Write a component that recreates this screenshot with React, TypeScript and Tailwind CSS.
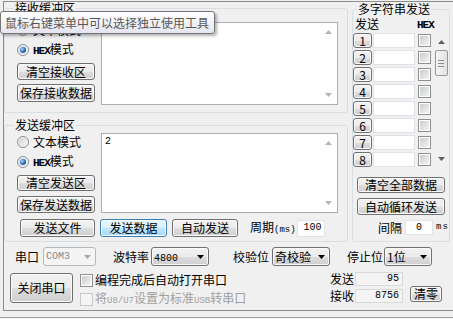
import React from 'react';

// classic Win7-ish serial port tool panel

const MONO = "font-['Liberation_Mono',monospace]";

const Arrow = ({ up, color }: { up?: boolean; color: string }) => (
    <svg width="7" height="4" viewBox="0 0 7 4">
        <path d={up ? 'M0 4L3.5 0L7 4Z' : 'M0 0H7L3.5 4Z'} fill={color} />
    </svg>
);

const Btn = ({ children, className = '', focus }: { children: React.ReactNode; className?: string; focus?: boolean }) => (
    <div
        className={`flex items-center justify-center rounded-[3px] border text-[12px] leading-none whitespace-nowrap shadow-[inset_0_0_0_1px_#fbfbfb] ${
            focus
                ? 'border-[#3c7fb1] bg-[linear-gradient(#eaf6fd,#d9f0fc_50%,#bee6fd_51%,#a7d9f5)]'
                : 'border-[#707070] bg-[linear-gradient(#f2f2f2,#ebebeb_50%,#dddddd_51%,#cfcfcf)]'
        } ${className}`}
    >
        {children}
    </div>
);

const Radio = ({ label, checked, className = '' }: { label: React.ReactNode; checked?: boolean; className?: string }) => (
    <div className={`flex items-center h-[20px] ${className}`}>
        <span className="w-[12px] h-[12px] rounded-full border border-[#8e8f8f] bg-[linear-gradient(135deg,#c9ccd0,#fdfdfd)] shadow-[inset_0_0_0_1px_#f4f4f4] flex items-center justify-center">
            {checked && (
                <span className="w-[6px] h-[6px] rounded-full bg-[radial-gradient(circle_at_35%_35%,#a8e0ff,#2766b0_55%,#0d3a6e)]" />
            )}
        </span>
        <span className="ml-[4px] whitespace-nowrap">{label}</span>
    </div>
);

const Check = ({ disabled }: { disabled?: boolean }) => (
    <span
        className={`block w-[13px] h-[13px] border ${
            disabled
                ? 'border-[#c8c8c8] bg-[#f4f4f4]'
                : 'border-[#8e8f8f] bg-[linear-gradient(135deg,#c6c9cd,#f7f7f7)] shadow-[inset_0_0_0_1px_#ffffff]'
        }`}
    />
);

const Combo = ({ children, className = '', disabled }: { children: React.ReactNode; className?: string; disabled?: boolean }) => (
    <div
        className={`flex items-center justify-between h-[19px] rounded-[3px] border pl-[2px] pr-[4px] whitespace-nowrap ${
            disabled
                ? 'border-[#b5b9bc] bg-[#f4f4f4] text-[#8a8a8a]'
                : 'border-[#707070] bg-[linear-gradient(#f2f2f2,#ebebeb_50%,#dddddd_51%,#cfcfcf)] shadow-[inset_0_0_0_1px_#fbfbfb]'
        } ${className}`}
    >
        <span>{children}</span>
        <Arrow color={disabled ? '#a8a8a8' : '#000000'} />
    </div>
);

const TextBox = ({ text, className = '' }: { text: string; className?: string }) => (
    <div className={`flex border border-[#abadb3] bg-white ${className}`}>
        <div className={`flex-1 pl-[3px] pt-[3px] text-[10px] ${MONO}`}>{text}</div>
        <div className="w-[17px] flex flex-col items-center justify-between py-[7px]">
            <Arrow up color="#b4b4b4" />
            <Arrow color="#b4b4b4" />
        </div>
    </div>
);

const HexText = () => <span className={`text-[11px] tracking-[-1px] font-bold ${MONO}`}>HEX</span>;

export default function App() {
    const rows = [1, 2, 3, 4, 5, 6, 7, 8];

    return (
        <div className="relative w-[453px] h-[319px] overflow-hidden bg-[#f0f0f0] text-black text-[12px] leading-none font-['Noto_Sans_CJK_SC',sans-serif] select-none">
            <div className="ml-[3px] mt-[1px] w-[450px] h-[310px] border-l border-t border-b border-[#8d8d8d]">
                {/* upper groups */}
                <div className="flex items-start h-[240px]">
                    <div className="w-[344px] flex flex-col">
                        {/* receive buffer */}
                        <fieldset className="h-[111px] border border-[#d5dfe5] rounded-[3px]">
                            <legend className="ml-[9px] px-[1px] leading-[12px]">接收缓冲区</legend>
                            <div className="flex pl-[12px]">
                                <div className="w-[78px] flex flex-col">
                                    <Radio className="mt-[6px]" label="文本模式" />
                                    <Radio checked label={<><HexText />模式</>} />
                                    <Btn className="mt-[3px] h-[17px]">清空接收区</Btn>
                                    <Btn className="mt-[4px] h-[18px]">保存接收数据</Btn>
                                </div>
                                <TextBox className="ml-[6px] mt-[8px] w-[237px] h-[83px]" text="00 00" />
                            </div>
                        </fieldset>

                        {/* send buffer */}
                        <fieldset className="mt-[6px] h-[123px] border border-[#d5dfe5] rounded-[3px]">
                            <legend className="ml-[9px] px-[1px] leading-[12px]">发送缓冲区</legend>
                            <div className="flex flex-col pl-[12px]">
                                <div className="flex">
                                    <div className="w-[78px] flex flex-col">
                                        <Radio className="mt-[1px]" label="文本模式" />
                                        <Radio checked label={<><HexText />模式</>} />
                                        <Btn className="mt-[3px] h-[16px]">清空发送区</Btn>
                                        <Btn className="mt-[5px] h-[17px]">保存发送数据</Btn>
                                    </div>
                                    <TextBox className="ml-[6px] mt-[2px] w-[237px] h-[80px]" text="2" />
                                </div>
                                <div className="flex items-center ml-[3px] mt-[6px] h-[18px]">
                                    <Btn className="w-[75px] h-[18px]">发送文件</Btn>
                                    <Btn focus className="ml-[5px] w-[67px] h-[18px]">发送数据</Btn>
                                    <Btn className="ml-[5px] w-[66px] h-[18px]">自动发送</Btn>
                                    <span className="ml-[12px] whitespace-nowrap">
                                        周期<span className={`text-[9px] ${MONO}`}>(ms)</span>
                                    </span>
                                    <div className={`ml-[1px] w-[28px] h-[17px] border border-[#dfe3e8] bg-white flex items-center justify-end pr-[2px] text-[10px] ${MONO}`}>
                                        100
                                    </div>
                                </div>
                            </div>
                        </fieldset>
                    </div>

                    {/* multi string send */}
                    <fieldset className="ml-[4px] mt-[1px] w-[98px] h-[239px] border border-[#d5dfe5] rounded-[3px]">
                        <legend className="ml-[4px] px-[1px] leading-[12px]">多字符串发送</legend>
                        <div className="flex flex-col">
                            <div className="flex items-center mt-[2px] h-[13px]">
                                <span className="ml-[2px]">发送</span>
                                <span className="ml-[38px]"><HexText /></span>
                            </div>
                            <div className="flex mt-[3px]">
                                <div className="w-[78px] flex flex-col gap-[2px]">
                                    {rows.map(n => (
                                        <div key={n} className="flex items-center h-[15px]">
                                            <Btn className="w-[19px] h-[15px]">{n}</Btn>
                                            <div className="ml-[1px] w-[42px] h-[15px] border border-[#dfe3e8] bg-white" />
                                            <span className="ml-[3px]"><Check /></span>
                                        </div>
                                    ))}
                                </div>
                                <div className="ml-[3px] w-[14px] h-[134px] flex flex-col items-center">
                                    <div className="h-[17px] flex items-center"><Arrow up color="#606060" /></div>
                                    <div className="w-[13px] h-[26px] rounded-[2px] border border-[#979797] bg-[linear-gradient(90deg,#f6f6f6,#e2e2e2)] flex flex-col items-center justify-center gap-[2px]">
                                        <span className="w-[6px] h-[1px] bg-[#8a8a8a]" />
                                        <span className="w-[6px] h-[1px] bg-[#8a8a8a]" />
                                        <span className="w-[6px] h-[1px] bg-[#8a8a8a]" />
                                    </div>
                                    <div className="flex-1" />
                                    <div className="h-[17px] flex items-center"><Arrow color="#606060" /></div>
                                </div>
                            </div>
                            <Btn className="ml-[4px] mt-[10px] w-[88px] h-[16px]">清空全部数据</Btn>
                            <Btn className="ml-[4px] mt-[5px] w-[88px] h-[17px]">自动循环发送</Btn>
                            <div className="flex items-center ml-[25px] mt-[5px] h-[15px]">
                                <span>间隔</span>
                                <div className={`ml-[3px] w-[28px] h-[15px] border border-[#dfe3e8] bg-white flex items-center justify-center text-[10px] ${MONO}`}>
                                    0
                                </div>
                                <span className={`ml-[3px] text-[9px] tracking-[1px] ${MONO}`}>ms</span>
                            </div>
                        </div>
                    </fieldset>
                </div>

                {/* port settings */}
                <div className="flex items-center mt-[5px] h-[19px] pl-[11px]">
                    <span className="w-[24px]">串口</span>
                    <Combo disabled className={`ml-[4px] w-[53px] text-[10px] ${MONO}`}>COM3</Combo>
                    <span className="ml-[17px] w-[36px]">波特率</span>
                    <Combo className="ml-[2px] w-[58px]"><span className={`text-[10px] ${MONO}`}>4800</span></Combo>
                    <span className="ml-[24px] w-[36px]">校验位</span>
                    <Combo className="ml-[3px] w-[58px]">奇校验</Combo>
                    <span className="ml-[17px] w-[36px]">停止位</span>
                    <Combo className="ml-[1px] w-[48px]">1位</Combo>
                </div>

                <div className="flex items-start mt-[6px]">
                    <Btn className="ml-[6px] mt-[1px] w-[63px] h-[30px]">关闭串口</Btn>
                    <div className="ml-[7px] w-[250px] flex flex-col">
                        <div className="flex items-center mt-[1px] h-[14px]">
                            <Check />
                            <span className="ml-[2px] whitespace-nowrap">编程完成后自动打开串口</span>
                        </div>
                        <div className="flex items-center mt-[5px] h-[14px] text-[#a0a0a0]">
                            <Check disabled />
                            <span className="ml-[2px] whitespace-nowrap">
                                将<span className={`text-[9px] ${MONO}`}>U8/U7</span>设置为标准<span className={`text-[9px] ${MONO}`}>USB</span>转串口
                            </span>
                        </div>
                    </div>
                    <div className="flex">
                        <div className="flex flex-col">
                            <div className="flex items-center h-[14px]">
                                <span className="w-[24px]">发送</span>
                                <div className={`ml-[1px] w-[48px] h-[14px] border border-[#d9d9d9] bg-[#f4f4f4] flex items-center justify-end pr-[3px] text-[10px] ${MONO}`}>95</div>
                            </div>
                            <div className="flex items-center mt-[3px] h-[14px]">
                                <span className="w-[24px]">接收</span>
                                <div className={`ml-[1px] w-[48px] h-[14px] border border-[#d9d9d9] bg-[#f4f4f4] flex items-center justify-end pr-[3px] text-[10px] ${MONO}`}>8756</div>
                            </div>
                        </div>
                        <Btn className="self-end mb-[1px] ml-[7px] w-[32px] h-[16px]">清零</Btn>
                    </div>
                </div>
            </div>
            <div className="mt-[6px] h-[1px] bg-[#a0a0a0]" />

            {/* tooltip */}
            <div className="absolute left-0 top-[11px] w-[215px] h-[23px] rounded-[3px] border border-[#767676] bg-[linear-gradient(#ffffff,#e4e5f0)] shadow-[2px_2px_3px_rgba(0,0,0,0.3)] flex items-center pl-[4px] text-[#575757] whitespace-nowrap">
                鼠标右键菜单中可以选择独立使用工具
            </div>
        </div>
    );
}
